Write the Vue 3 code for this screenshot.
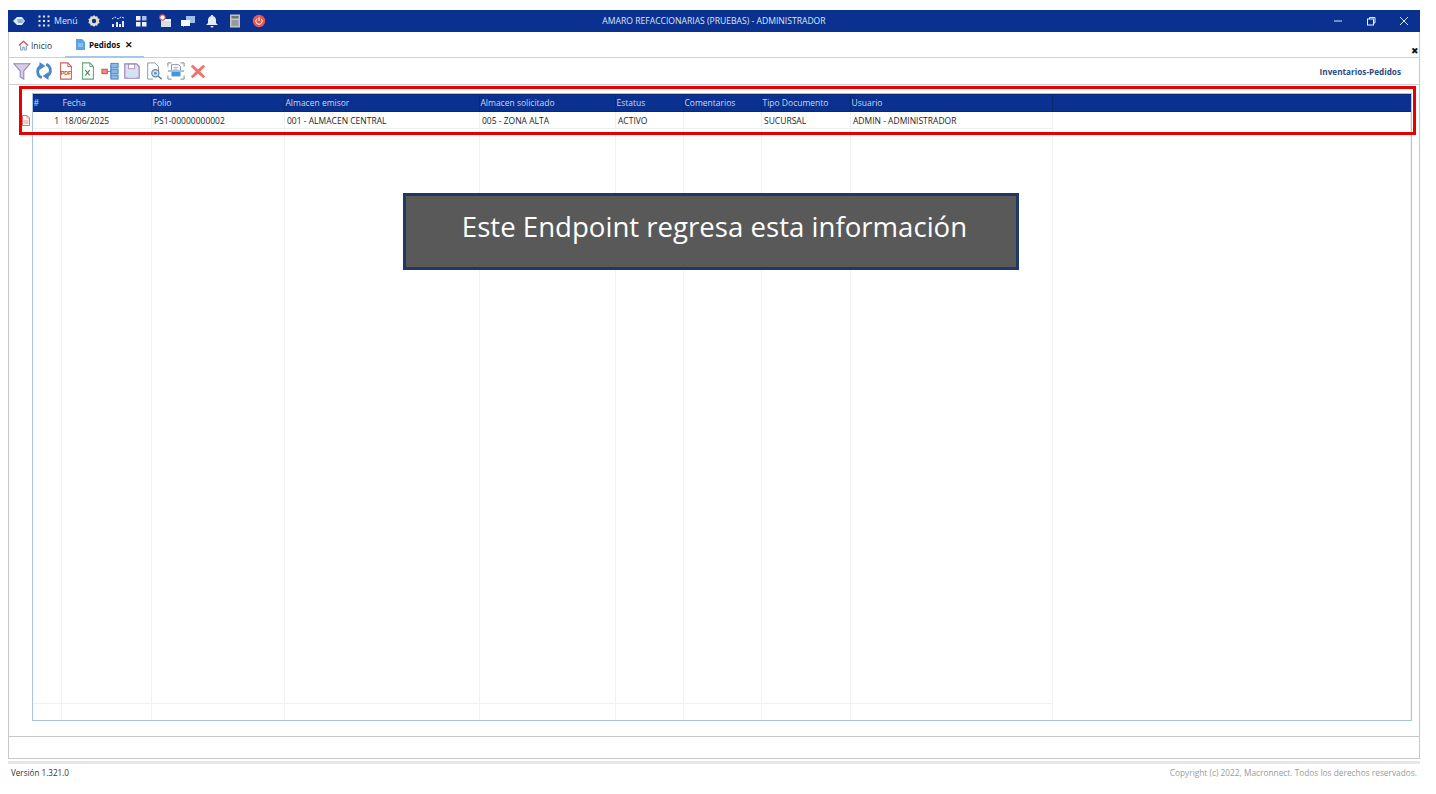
<template>
  <div class="page">
    <div class="window">
      <header class="titlebar">
        <div class="title-left">
          <svg class="logo" viewBox="0 0 14 14"><path d="M1 7 5 3h5l3 4-3 4H5z" fill="#dfe9f7"/><path d="M5 5h5l2 2-2 2H6z" fill="#8fb2e0"/></svg>
          <button class="menu-btn">
            <svg width="12" height="12" viewBox="0 0 12 12" fill="#dfe6f5">
              <rect v-for="d in dots" :key="d.k" :x="d.x" :y="d.y" width="2" height="2" />
            </svg>
            <span>Menú</span>
          </button>
          <div class="title-icons">
            <svg viewBox="0 0 14 14"><path d="M7 1l1.3 1.6 2-.3.5 2 1.9.8-.9 1.9.9 1.9-1.9.8-.5 2-2-.3L7 13l-1.3-1.6-2 .3-.5-2-1.9-.8.9-1.9-.9-1.9 1.9-.8.5-2 2 .3z" fill="#e6dfc8"/><circle cx="7" cy="7" r="2.2" fill="#0a3190"/></svg>
            <svg viewBox="0 0 14 14" fill="#dfe6f5"><rect x="1" y="10" width="2" height="3"/><rect x="5" y="8" width="2" height="5"/><rect x="8" y="10" width="2" height="3"/><rect x="11" y="7" width="2" height="6"/><path d="M1 5l3-2 3 2 3-2 3 1" fill="none" stroke="#dfe6f5" stroke-width="1" stroke-dasharray="2 1"/></svg>
            <svg viewBox="0 0 14 14"><rect x="2" y="2" width="4.500" height="4.500" fill="#eef2fa"/><rect x="8" y="2" width="4.500" height="4.500" fill="#a9c3e8"/><rect x="2" y="8" width="4.500" height="4.500" fill="#eef2fa"/><rect x="8" y="8" width="4.500" height="4.500" fill="#eef2fa"/></svg>
            <svg viewBox="0 0 14 14"><rect x="3" y="5" width="10" height="8" fill="#d8dde6"/><rect x="3" y="5" width="10" height="2" fill="#f3f3f3"/><circle cx="4.5" cy="3.5" r="2.7" fill="#fff" stroke="#e0524d" stroke-width="1.2"/></svg>
            <svg viewBox="0 0 14 14"><rect x="5" y="2" width="9" height="7" fill="#9cc0e6"/><path d="M0 6h9v6H3l-1 1v-1H0z" fill="#f4f7fb"/></svg>
            <svg viewBox="0 0 14 14" fill="#e3ecfa"><path d="M7 1c.8 0 1.2.5 1.3 1.2C10 2.800 11 4.200 11 6v3l2 2H1l2-2V6c0-1.800 1-3.200 2.700-3.800C5.800 1.500 6.200 1 7 1z"/><path d="M5.500 12h3a1.500 1.500 0 0 1-3 0z"/></svg>
            <svg viewBox="0 0 14 14"><rect x="2" y="0.500" width="10" height="13" fill="#c4c4c4"/><rect x="3.500" y="2" width="7" height="2.500" fill="#6f7479"/><rect x="3.500" y="6" width="7" height="6" fill="#9a9a9a"/></svg>
            <svg viewBox="0 0 14 14"><circle cx="7" cy="7" r="6.200" fill="#e8574f"/><path d="M4.800 4.800a3.200 3.200 0 1 0 4.400 0" fill="none" stroke="#fff" stroke-width="1"/><path d="M7 3v4" stroke="#fff" stroke-width="1"/></svg>
          </div>
        </div>
        <div class="title-text">AMARO REFACCIONARIAS (PRUEBAS) - ADMINISTRADOR</div>
        <div class="win-controls">
          <svg viewBox="0 0 12 12"><path d="M2 6h8" stroke="#dfe6f5" /></svg>
          <svg viewBox="0 0 12 12" fill="none" stroke="#eef2fa"><rect x="2.500" y="4" width="6" height="6"/><path d="M4.500 4V2.500h5.500V8H8.500"/></svg>
          <svg viewBox="0 0 12 12"><path d="M2 2l8 8M10 2l-8 8" stroke="#dfe6f5" /></svg>
        </div>
      </header>

      <nav class="tabs">
        <div class="tab tab-home">
          <svg width="11" height="11" viewBox="0 0 12 12"><path d="M1 6 6 1.500 11 6" fill="none" stroke="#c0504d" stroke-width="1.300"/><path d="M2.800 6v5h2.400V8h1.600v3h2.400V6" fill="#e8eef6" stroke="#5d87b8" stroke-width=".8"/></svg>
          <span>Inicio</span>
        </div>
        <div class="tab tab-active">
          <svg width="9" height="11" viewBox="0 0 9 11"><path d="M0 0h6l3 3v8H0z" fill="#5aa4e6"/><path d="M2 5h5M2 7h5" stroke="#d5e8fa" stroke-width=".8"/></svg>
          <span class="tab-name">Pedidos</span>
          <span class="tab-close">✕</span>
        </div>
        <span class="strip-close">✖</span>
      </nav>

      <div class="toolbar">
        <div class="tools">
          <svg viewBox="0 0 20 20"><path d="M1 2h18l-7 8v9l-4-2.500V10z" fill="#d6cde6" stroke="#9385b5" stroke-width="1.200"/></svg>
          <svg viewBox="0 0 20 20" fill="none" stroke="#4a86c8" stroke-width="3"><path d="M7.500 17.500A7.500 7.500 0 0 1 6 4.500"/><path d="M12.500 2.500A7.500 7.500 0 0 1 14 15.500"/><path d="M5 0l6.500 4.500L5 9zM15 20l-6.500-4.500L15 11z" fill="#4a86c8" stroke="none"/></svg>
          <svg viewBox="0 0 20 20"><path d="M4 1h8l4 4v14H4z" fill="#fff" stroke="#d0605a" stroke-width="1.200"/><path d="M12 1v4h4" fill="none" stroke="#d0605a"/><text x="10" y="14" class="mini" fill="#d0403a">PDF</text></svg>
          <svg viewBox="0 0 20 20"><path d="M4 1h8l4 4v14H4z" fill="#fff" stroke="#5fa777" stroke-width="1.200"/><path d="M12 1v4h4" fill="none" stroke="#5fa777"/><path d="M7 9l5 6M12 9l-5 6" stroke="#3d8a58" stroke-width="1.300"/></svg>
          <svg viewBox="0 0 20 20"><rect x="1" y="8" width="6" height="5" fill="#f08a8a" stroke="#d8433f"/><path d="M7 10.500h4M11 4v13" stroke="#4b86c4"/><rect x="11" y="1.500" width="8" height="5" fill="#8ab8e6" stroke="#3f7fc0"/><rect x="11" y="8" width="8" height="5" fill="#8ab8e6" stroke="#3f7fc0"/><rect x="11" y="14.500" width="8" height="4.500" fill="#8ab8e6" stroke="#3f7fc0"/></svg>
          <svg viewBox="0 0 20 20"><path d="M2 2h13l3 3v13H2z" fill="#e4ddf0" stroke="#9385b5" stroke-width="1.300"/><rect x="6" y="2.500" width="7" height="5" fill="#fff" stroke="#9385b5" stroke-width=".8"/><rect x="5" y="11" width="10" height="6.500" fill="#cfe3f7"/></svg>
          <svg viewBox="0 0 20 20"><path d="M3 1h8l4 4v6M9 19H3V1" fill="#fff" stroke="#8e9aa8" stroke-width="1.100"/><circle cx="11.500" cy="12.500" r="4" fill="#cfe3f7" stroke="#5f7f9e" stroke-width="1.200"/><circle cx="11.500" cy="12.500" r="1.500" fill="#4b93d4"/><path d="M14.500 15.500l4 3.500" stroke="#5f7f9e" stroke-width="1.600"/></svg>
          <svg viewBox="0 0 20 20" fill="none"><path d="M1 5V1h4M15 1h4v4M19 15v4h-4M5 19H1v-4" stroke="#7d8b99" stroke-width="1.100"/><path d="M5 9V3h8l2 2v4" stroke="#7d8b99"/><path d="M1 10h18" stroke="#4b93d4" stroke-width="1.200"/><path d="M5 11h10v5H5z" fill="#4b93d4"/><path d="M7 6h5M7 8h5" stroke="#7d8b99" stroke-width=".7"/></svg>
          <svg viewBox="0 0 20 20"><path d="M4 3l6 5 6-5 2 2-5.500 5.500L18 16l-2 2-6-5-6 5-2-2 5.500-5.500L2 5z" fill="#ee7470"/></svg>
        </div>
        <span class="crumb">Inventarios-Pedidos</span>
      </div>

      <main class="content">
        <div class="grid">
          <div class="grid-row head">
            <div v-for="c in columns" :key="c.key" class="cell">{{ c.label }}</div>
            <div class="cell rest"></div>
          </div>
          <div v-for="row in rows" :key="row.folio" class="grid-row data">
            <div v-for="c in columns" :key="c.key" class="cell" :class="{ num: c.key === 'n' }">{{ row[c.key] }}</div>
            <div class="cell rest"></div>
          </div>
          <div class="grid-row filler">
            <div v-for="c in columns" :key="c.key" class="cell"></div>
            <div class="cell rest"></div>
          </div>
          <div class="grid-row summary">
            <div v-for="c in columns" :key="c.key" class="cell"></div>
            <div class="cell rest"></div>
          </div>
          <svg class="row-pdf" width="8" height="11" viewBox="0 0 8 11"><path d="M.5.500h4.500l2.500 2.500v7.500h-7z" fill="#fff" stroke="#e0706c"/><path d="M5 .500v2.500h2.500" fill="none" stroke="#e0706c" stroke-width=".7"/><path d="M1.500 6h5M1.500 8h5" stroke="#e0706c" stroke-width=".8"/></svg>
        </div>
      </main>

      <div class="status-box"></div>
    </div>

    <div class="separator"></div>
    <footer class="footer">
      <span class="version">Versión 1.321.0</span>
      <span class="copy">Copyright (c) 2022, Macronnect. Todos los derechos reservados.</span>
    </footer>

    <div class="red-frame"></div>
    <div class="callout">Este Endpoint regresa esta información</div>
  </div>
</template>

<script setup>
const dots = []
for (let y = 0; y < 3; y++) {
  for (let x = 0; x < 3; x++) {
    dots.push({ k: `${x}-${y}`, x: x * 4.5 + 0.5, y: y * 4.5 + 0.5 })
  }
}

const columns = [
  { key: "n", label: "#" },
  { key: "fecha", label: "Fecha" },
  { key: "folio", label: "Folio" },
  { key: "emisor", label: "Almacen emisor" },
  { key: "solicitado", label: "Almacen solicitado" },
  { key: "estatus", label: "Estatus" },
  { key: "comentarios", label: "Comentarios" },
  { key: "tipo", label: "Tipo Documento" },
  { key: "usuario", label: "Usuario" },
]

const rows = [
  {
    n: "1",
    fecha: "18/06/2025",
    folio: "PS1-00000000002",
    emisor: "001 - ALMACEN CENTRAL",
    solicitado: "005 - ZONA ALTA",
    estatus: "ACTIVO",
    comentarios: "",
    tipo: "SUCURSAL",
    usuario: "ADMIN - ADMINISTRADOR",
  },
]
</script>

<style>
html,
body {
  margin: 0;
  background: #fff;
}
</style>

<style scoped>
.page {
  position: relative;
  width: 1436px;
  height: 794px;
  overflow: hidden;
  background: #fff;
  font-family: "Open Sans", "Noto Sans", sans-serif;
  font-size: 8.5px;
  color: #1c1c1c;
}

.window {
  margin: 10px 16px 0 8px;
  height: 749px;
  display: flex;
  flex-direction: column;
  box-sizing: border-box;
  border: 1px solid #c8c8c8;
  border-top: none;
}

.titlebar {
  height: 22px;
  margin: 0 -1px;
  flex: none;
  background: #0a3190;
  color: #dfe6f5;
  display: grid;
  grid-template-columns: 1fr auto 1fr;
  align-items: center;
}

.title-left {
  display: flex;
  align-items: center;
  padding-left: 4px;
}

.logo {
  width: 14px;
  height: 14px;
}

.menu-btn {
  display: flex;
  align-items: center;
  gap: 4px;
  margin-left: 12px;
  padding: 0;
  border: 0;
  background: none;
  color: inherit;
  font: inherit;
  font-size: 8.800px;
}

.title-icons {
  display: flex;
  gap: 9.500px;
  margin-left: 9.500px;
}

.title-icons svg {
  width: 14px;
  height: 14px;
}

.title-text {
  font-size: 8.600px;
  white-space: nowrap;
}

.win-controls {
  justify-self: end;
  display: flex;
  gap: 21px;
  padding-right: 10px;
}

.win-controls svg {
  width: 12px;
  height: 12px;
}

.tabs {
  position: relative;
  height: 26px;
  flex: none;
  display: flex;
  align-items: center;
  border-bottom: 1px solid #d0d0d0;
  box-sizing: border-box;
  padding-left: 9px;
}

.tab {
  display: flex;
  align-items: center;
  height: 100%;
  box-sizing: border-box;
  padding-top: 1px;
}

.tab-home {
  gap: 2px;
  width: 47px;
  color: #333;
}

.tab-active {
  width: 79px;
  padding-left: 11px;
  gap: 4px;
  border-bottom: 2px solid #a8c8e8;
  margin-bottom: -1px;
  height: calc(100% + 1px);
  font-size: 8px;
  font-weight: 700;
  color: #111;
}

.tab-close {
  margin-left: 1px;
  font-size: 9px;
  font-weight: 700;
}

.strip-close {
  position: absolute;
  right: 0;
  bottom: 0;
  font-size: 9px;
  color: #111;
}

.toolbar {
  height: 27px;
  flex: none;
  display: flex;
  align-items: center;
  justify-content: space-between;
  border-bottom: 1px solid #d0d0d0;
  box-sizing: border-box;
  padding: 0 18px 0 4px;
}

.tools {
  display: flex;
  gap: 4px;
}

.tools svg {
  width: 18px;
  height: 18px;
}

.mini {
  font-size: 6px;
  font-weight: 700;
  text-anchor: middle;
  font-family: "Liberation Sans", sans-serif;
}

.crumb {
  font-weight: 700;
  font-size: 8.200px;
  color: #2b4c86;
}

.content {
  flex: 1;
  min-height: 0;
  box-sizing: border-box;
  padding: 8px 7px 15px 23px;
  border-bottom: 1px solid #c8c8c8;
}

.grid {
  position: relative;
  height: 100%;
  display: flex;
  flex-direction: column;
  box-sizing: border-box;
  border: 1px solid #a6c4e4;
  background: #fff;
}

.grid-row {
  display: grid;
  grid-template-columns: 29px 90px 133px 195px 136px 68px 78px 89px 202px 1fr;
}

.head {
  height: 18px;
  flex: none;
  background: #0a3190;
  color: #c9d6ef;
  border-top: 1px solid #0a2a70;
  border-bottom: 1px solid #0a2a70;
  box-sizing: border-box;
}

.head .cell {
  display: flex;
  align-items: center;
  padding: 0 0 1px 0.500px;
  border-right: 1px solid #0a2a70;
}

.head .rest,
.data .rest,
.filler .rest,
.summary .rest {
  border-right: none;
}

.data {
  height: 17px;
  flex: none;
}

.data .cell {
  display: flex;
  align-items: center;
  padding-left: 2px;
  border-right: 1px solid #f0f0f0;
  border-bottom: 1px solid #f0f0f0;
  color: #1c1c1c;
}

.data .rest {
  border-bottom: none;
}

.data .num {
  justify-content: flex-end;
  padding-right: 2px;
}

.cell {
  box-sizing: border-box;
  min-width: 0;
  white-space: nowrap;
}

.filler {
  flex: 1;
}

.filler .cell,
.summary .cell {
  border-right: 1px solid #f2f2f2;
}

.summary {
  height: 17px;
  flex: none;
}

.summary .cell {
  border-top: 1px solid #f0f0f0;
}

.summary .rest {
  border-top: none;
}

.row-pdf {
  position: absolute;
  left: -11px;
  top: 21px;
}

.status-box {
  height: 21px;
  flex: none;
}

.separator {
  height: 3px;
  margin: 2px 16px 0 8px;
  background: #e6e6e6;
}

.footer {
  display: flex;
  justify-content: space-between;
  align-items: center;
  margin: 1px 19px 0 11px;
  height: 14px;
}

.version {
  font-size: 8.100px;
  color: #333;
}

.copy {
  font-size: 8.330px;
  color: #9a9a9a;
}

.red-frame {
  position: absolute;
  left: 19px;
  top: 86px;
  width: 1397px;
  height: 49px;
  box-sizing: border-box;
  border: 3px solid #e60000;
  pointer-events: none;
}

.callout {
  position: absolute;
  left: 403px;
  top: 193px;
  width: 616px;
  height: 77px;
  box-sizing: border-box;
  border: 3px solid #1f3864;
  background: #595959;
  color: #fff;
  font-size: 27.600px;
  display: flex;
  align-items: center;
  justify-content: center;
  padding: 0 0 12px 7px;
}
</style>
